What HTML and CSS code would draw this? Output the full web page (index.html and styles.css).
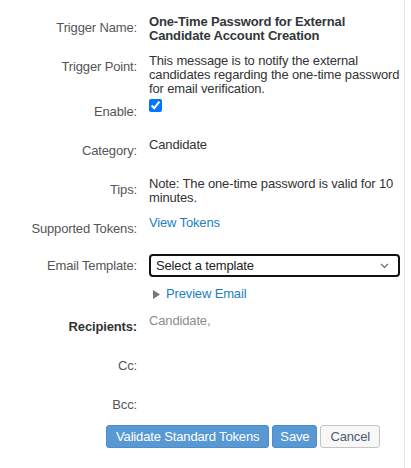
FILE: index.html
```html
<!DOCTYPE html>
<html lang="en">
<head>
  <meta charset="UTF-8" />
  <title>Email Trigger Settings</title>
  <link rel="stylesheet" href="styles.css">
</head>
<body>
  <div class="panel">
    <div class="form">
      <div class="row">
        <div class="label">Trigger Name:</div>
        <div class="value name">One-Time Password for External Candidate Account Creation</div>
      </div>
      <div class="row">
        <div class="label">Trigger Point:</div>
        <div class="value">This message is to notify the external candidates regarding the one-time password for email verification.</div>
      </div>
      <div class="row">
        <div class="label">Enable:</div>
        <div class="value"><input type="checkbox" class="check" checked></div>
      </div>
      <div class="row">
        <div class="label">Category:</div>
        <div class="value">Candidate</div>
      </div>
      <div class="row">
        <div class="label">Tips:</div>
        <div class="value">Note: The one-time password is valid for 10 minutes.</div>
      </div>
      <div class="row">
        <div class="label">Supported Tokens:</div>
        <div class="value"><a class="link" href="#">View Tokens</a></div>
      </div>
      <div class="row template">
        <div class="label">Email Template:</div>
        <div class="value">
          <div class="select">
            <span>Select a template</span>
            <svg width="9" height="6" viewBox="0 0 9 6"><path d="M1 1l3.5 3.5L8 1" fill="none" stroke="#666" stroke-width="1.1"/></svg>
          </div>
          <div class="preview">
            <svg width="7" height="9" viewBox="0 0 7 9"><path d="M0 0l7 4.5L0 9z" fill="#777"/></svg>
            <a class="link" href="#">Preview Email</a>
          </div>
        </div>
      </div>
      <div class="row">
        <div class="label strong">Recipients:</div>
        <div class="value muted">Candidate,</div>
      </div>
      <div class="row">
        <div class="label">Cc:</div>
        <div class="value"></div>
      </div>
      <div class="row last">
        <div class="label">Bcc:</div>
        <div class="value"></div>
      </div>
      <div class="actions">
        <button class="btn primary">Validate Standard Tokens</button>
        <button class="btn primary save">Save</button>
        <button class="btn">Cancel</button>
      </div>
    </div>
  </div>
</body>
</html>
```

FILE: styles.css
```css
body {
  margin: 0;
  font-family: 'Liberation Sans', Arial, sans-serif;
  font-size: 13px;
  letter-spacing: -0.15px;
  color: #333;
  background: #fff;
}
.panel {
  width: 404px;
  min-height: 100vh;
  border-right: 1px solid #e6e6e6;
}
.form {
  padding-top: 14px;
}
.row {
  display: grid;
  grid-template-columns: 137px 251px;
  column-gap: 12px;
  margin-bottom: 2px;
}
.label {
  text-align: right;
  color: #555;
  line-height: 14px;
  padding: 7px 0 16px;
}
.label.strong {
  font-weight: bold;
  color: #333;
}
.value {
  line-height: 14px;
  padding-top: 1px;
}
.value.name {
  font-weight: bold;
  color: #32363a;
}
.value.muted {
  color: #8c8c8c;
}
.check {
  margin: 0;
  width: 13px;
  height: 13px;
}
.link {
  color: #1a7fc4;
  text-decoration: none;
}
.template {
  margin-top: -1px;
}
.template .label {
  padding-top: 6px;
}
.select {
  box-sizing: border-box;
  height: 23px;
  border: 2px solid #111;
  border-radius: 4px;
  padding: 0 9px 0 5px;
  display: flex;
  align-items: center;
  justify-content: space-between;
  color: #222;
}
.preview {
  display: flex;
  align-items: center;
  gap: 6px;
  margin: 10px 0 10px 4px;
}
.row.last .label {
  padding-bottom: 14px;
}
.actions {
  display: flex;
  gap: 3px;
  padding-left: 106px;
  margin-top: -3px;
}
.btn {
  font-family: inherit;
  font-size: 13px;
  letter-spacing: inherit;
  height: 23px;
  padding: 0 9px;
  border-radius: 3px;
  border: 1px solid #c4c4c4;
  background: #f7f7f7;
  color: #4a5b6d;
  cursor: pointer;
}
.btn.save {
  padding: 0 7px;
}
.btn.primary {
  background: #5899d4;
  border-color: #4d8ccb;
  color: #fff;
}
```
